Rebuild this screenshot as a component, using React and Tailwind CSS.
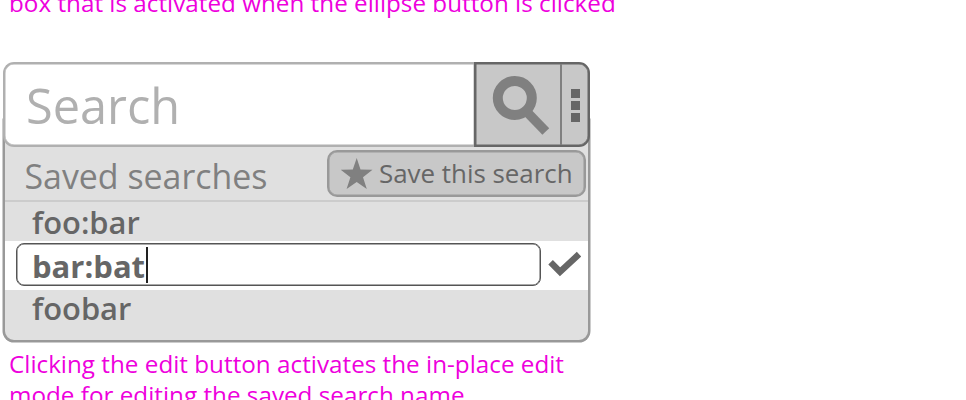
function Note({ className = "", children }) {
  return (
    <div className={`ml-[9px] whitespace-nowrap text-[24.25px] leading-[31px] text-[#ee00dd] ${className}`}>
      {children}
    </div>
  );
}

function SearchBar() {
  return (
    <div className="relative z-10 flex h-[85px] w-[587px]">
      <div className="h-[85px] w-[471px] rounded-l-[11px] border-2 border-r-0 border-[#b0b0b0] bg-white pl-[21px] shadow-[inset_0_0_0_0.5px_#b0b0b0]">
        <span className="block text-[48.7px] leading-[82px] text-[#b0b0b0]">Search</span>
      </div>
      <div className="flex h-[85px] w-[116px] rounded-r-[11px] border-2 border-[#666] bg-[#c8c8c8] shadow-[inset_0_0_0_0.5px_#666]">
        <div className="h-full w-[86px] border-r-2 border-[#808080]">
          <svg className="h-[81px] w-[84px]" viewBox="476 64 84 81" fill="none" stroke="#808080">
            <circle cx="514.8" cy="98" r="17" strokeWidth="10" />
            <path d="M525.5 110.5 545.8 131.5" strokeWidth="9.5" />
          </svg>
        </div>
        <div className="flex flex-1 flex-col items-center justify-center gap-[3px] pt-px">
          <span className="size-[9px] bg-[#666]" />
          <span className="size-[9px] bg-[#666]" />
          <span className="size-[9px] bg-[#666]" />
        </div>
      </div>
    </div>
  );
}

function SavedSearches() {
  return (
    <div className="-mt-[28px] h-[223px] w-[587px] rounded-b-[11px] border-2 border-[#999] bg-[#e0e0e0] pt-[28px] shadow-[0_0_0_0.5px_#999]">
      <div className="flex h-[53px] border-b-2 border-[#ccc]">
        <div className="w-[322px] pl-[19.5px] text-[33.9px] leading-[54px] text-[#808080]">Saved searches</div>
        <button className="mt-[1px] flex h-[47px] w-[259px] items-center rounded-[10px] border-2 border-[#999] bg-[#c8c8c8] pl-[11px] text-[25.9px] text-[#666] shadow-[inset_0_0_0_0.5px_#999]">
          <svg className="h-[32px] w-[33px] shrink-0" viewBox="340 158 33 32">
            <path
              fill="#808080"
              d="M356.7 158 360.5 169.6 372.5 169.8 363 177.2 366.8 189 356.7 182 346.6 189 350.4 177.2 340.7 169.8 352.8 169.6Z"
            />
          </svg>
          <span className="ml-[6px] whitespace-nowrap leading-[43px]">Save this search</span>
        </button>
      </div>
      <div className="h-[39px] pl-[27px] text-[30.9px] font-semibold leading-[40px] text-[#666]">foo:bar</div>
      <div className="flex h-[49px] bg-white pl-[11px] pt-[2px]">
        <div className="flex h-[43px] w-[525px] rounded-[8px] border border-[#555] pl-[15px] shadow-[inset_0_0_0_0.5px_#555]">
          <span className="text-[31px] font-bold leading-[44px] text-[#666]">bar:bat</span>
          <span className="ml-[1px] mt-[3px] h-[36px] w-[1.5px] bg-[#222]" />
        </div>
        <svg className="ml-[7px] h-[26px] w-[33px] mt-[8px]" viewBox="548 251 33 26">
          <path d="M550.6 262.2 560 271.8 579 254.2" fill="none" stroke="#666" strokeWidth="6.4" />
        </svg>
      </div>
      <div className="pl-[27px] text-[30.9px] font-semibold leading-[36px] text-[#666]">foobar</div>
    </div>
  );
}

export default function App() {
  return (
    <main className="h-[400px] w-[966px] overflow-hidden bg-white font-['Open_Sans','Noto_Sans',sans-serif]">
      <Note className="-mt-[13px]">box that is activated when the ellipse button is clicked</Note>
      <section className="ml-[3px] mt-[44px]">
        <SearchBar />
        <SavedSearches />
      </section>
      <Note className="mt-[6px]">
        Clicking the edit button activates the in-place edit
        <br />
        mode for editing the saved search name.
      </Note>
    </main>
  );
}
